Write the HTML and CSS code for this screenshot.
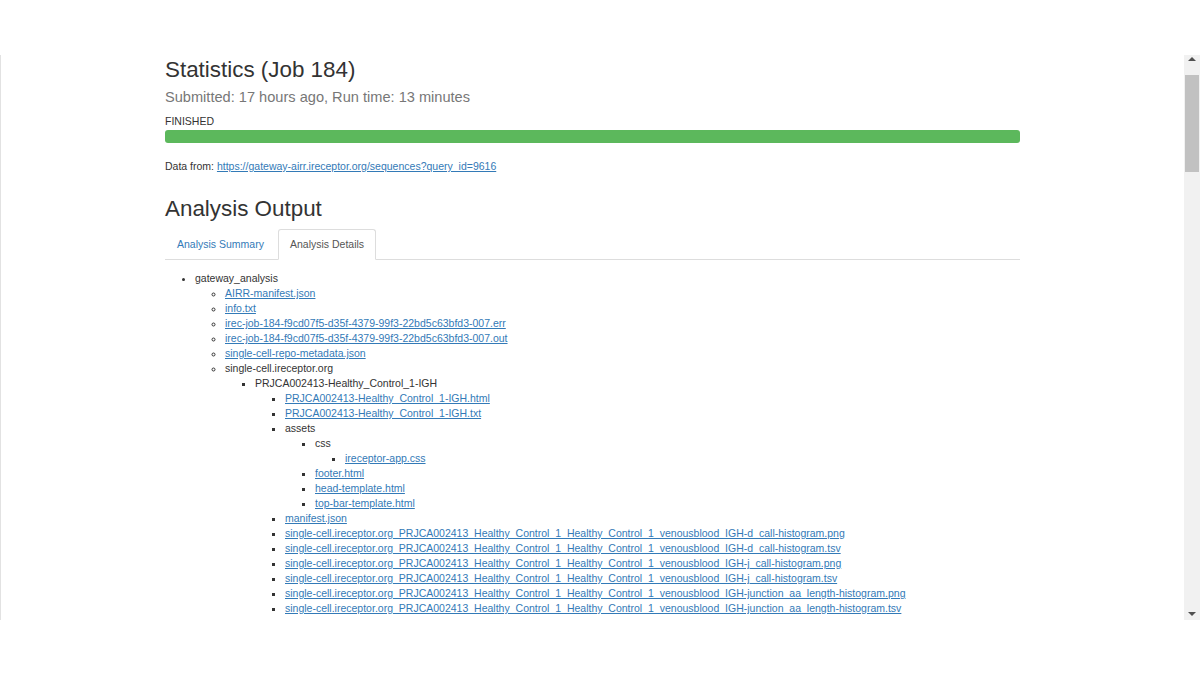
FILE: index.html
```html
<!DOCTYPE html>
<html lang="en">
<head>
<meta charset="utf-8">
<title>Statistics (Job 184)</title>
<link rel="stylesheet" href="styles.css">
</head>
<body>
<div class="frame">
  <div class="viewport">
    <div class="container">
      <h2 class="title">Statistics (Job 184)</h2>
      <p class="sub">Submitted: 17 hours ago, Run time: 13 minutes</p>
      <p class="status">FINISHED</p>
      <div class="progress"><div class="bar" style="width:100%"></div></div>
      <p class="data">Data from: <a href="#">https://gateway-airr.ireceptor.org/sequences?query_id=9616</a></p>
      <h2 class="title out">Analysis Output</h2>
      <div class="tabs">
        <a class="tab" href="#">Analysis Summary</a>
        <a class="tab active" href="#">Analysis Details</a>
      </div>
      <ul class="tree">
        <li>gateway_analysis
          <ul>
            <li><a href="#">AIRR-manifest.json</a></li>
            <li><a href="#">info.txt</a></li>
            <li><a href="#">irec-job-184-f9cd07f5-d35f-4379-99f3-22bd5c63bfd3-007.err</a></li>
            <li><a href="#">irec-job-184-f9cd07f5-d35f-4379-99f3-22bd5c63bfd3-007.out</a></li>
            <li><a href="#">single-cell-repo-metadata.json</a></li>
            <li>single-cell.ireceptor.org
              <ul>
                <li>PRJCA002413-Healthy_Control_1-IGH
                  <ul>
                    <li><a href="#">PRJCA002413-Healthy_Control_1-IGH.html</a></li>
                    <li><a href="#">PRJCA002413-Healthy_Control_1-IGH.txt</a></li>
                    <li>assets
                      <ul>
                        <li>css
                          <ul>
                            <li><a href="#">ireceptor-app.css</a></li>
                          </ul>
                        </li>
                        <li><a href="#">footer.html</a></li>
                        <li><a href="#">head-template.html</a></li>
                        <li><a href="#">top-bar-template.html</a></li>
                      </ul>
                    </li>
                    <li><a href="#">manifest.json</a></li>
                    <li><a href="#">single-cell.ireceptor.org_PRJCA002413_Healthy_Control_1_Healthy_Control_1_venousblood_IGH-d_call-histogram.png</a></li>
                    <li><a href="#">single-cell.ireceptor.org_PRJCA002413_Healthy_Control_1_Healthy_Control_1_venousblood_IGH-d_call-histogram.tsv</a></li>
                    <li><a href="#">single-cell.ireceptor.org_PRJCA002413_Healthy_Control_1_Healthy_Control_1_venousblood_IGH-j_call-histogram.png</a></li>
                    <li><a href="#">single-cell.ireceptor.org_PRJCA002413_Healthy_Control_1_Healthy_Control_1_venousblood_IGH-j_call-histogram.tsv</a></li>
                    <li><a href="#">single-cell.ireceptor.org_PRJCA002413_Healthy_Control_1_Healthy_Control_1_venousblood_IGH-junction_aa_length-histogram.png</a></li>
                    <li><a href="#">single-cell.ireceptor.org_PRJCA002413_Healthy_Control_1_Healthy_Control_1_venousblood_IGH-junction_aa_length-histogram.tsv</a></li>
                  </ul>
                </li>
              </ul>
            </li>
          </ul>
        </li>
      </ul>
    </div>
  </div>
  <div class="scrollbar">
    <div class="arrow up"></div>
    <div class="track"><div class="thumb"></div></div>
    <div class="arrow down"></div>
  </div>
</div>
</body>
</html>
```
FILE: styles.css
```css
html, body {
  margin: 0;
  padding: 0;
  background: #fff;
}
body {
  font-family: "Liberation Sans", Arial, Helvetica, sans-serif;
  color: #333;
  font-size: 10.5px;
  line-height: 15px;
}
.frame {
  margin-top: 55px;
  height: 565px;
  display: flex;
  border-left: 1px solid #e2e2e2;
  box-sizing: border-box;
}
.viewport {
  flex: 1;
  overflow: hidden;
  min-width: 0;
}
.container {
  width: 855px;
  margin: 0 auto;
}
.title {
  font-size: 22.4px;
  line-height: 24px;
  font-weight: 400;
  margin: 3px 0 0;
  color: #333;
}
.sub {
  font-size: 14.6px;
  line-height: 17px;
  color: #777;
  margin: 7px 0 0;
}
.status {
  margin: 8px 0 0;
}
.progress {
  margin-top: 1px;
  height: 13px;
  background: #f5f5f5;
  border-radius: 3px;
  overflow: hidden;
}
.bar {
  height: 100%;
  background: #5cb85c;
}
.data {
  margin: 16px 0 0;
}
a {
  color: #337ab7;
  text-decoration: underline;
}
.out {
  margin-top: 23px;
}
.tabs {
  margin-top: 8px;
  display: flex;
  border-bottom: 1px solid #ddd;
  height: 30px;
}
.tab {
  display: block;
  padding: 7px 11px;
  line-height: 15px;
  margin-right: 2px;
  margin-bottom: -1px;
  border: 1px solid transparent;
  border-radius: 3px 3px 0 0;
  text-decoration: none;
  color: #337ab7;
}
.tab.active {
  color: #555;
  background: #fff;
  border-color: #ddd #ddd transparent;
}
.tree {
  margin: 11px 0 0;
  padding-left: 30px;
}
.tree ul {
  margin: 0;
  padding-left: 30px;
}
.tree li {
  line-height: 15px;
}
.scrollbar {
  width: 16px;
  background: #f1f1f1;
  display: flex;
  flex-direction: column;
}
.arrow {
  height: 17px;
  position: relative;
}
.arrow::after {
  content: "";
  position: absolute;
  left: 4px;
  width: 0;
  height: 0;
  border-left: 4px solid transparent;
  border-right: 4px solid transparent;
}
.arrow.up::after {
  top: 2px;
  border-bottom: 4px solid #505050;
}
.arrow.down::after {
  top: 9px;
  border-top: 4px solid #505050;
}
.track {
  flex: 1;
  padding: 3px 1px 0;
}
.thumb {
  height: 97px;
  background: #c1c1c1;
}
```
